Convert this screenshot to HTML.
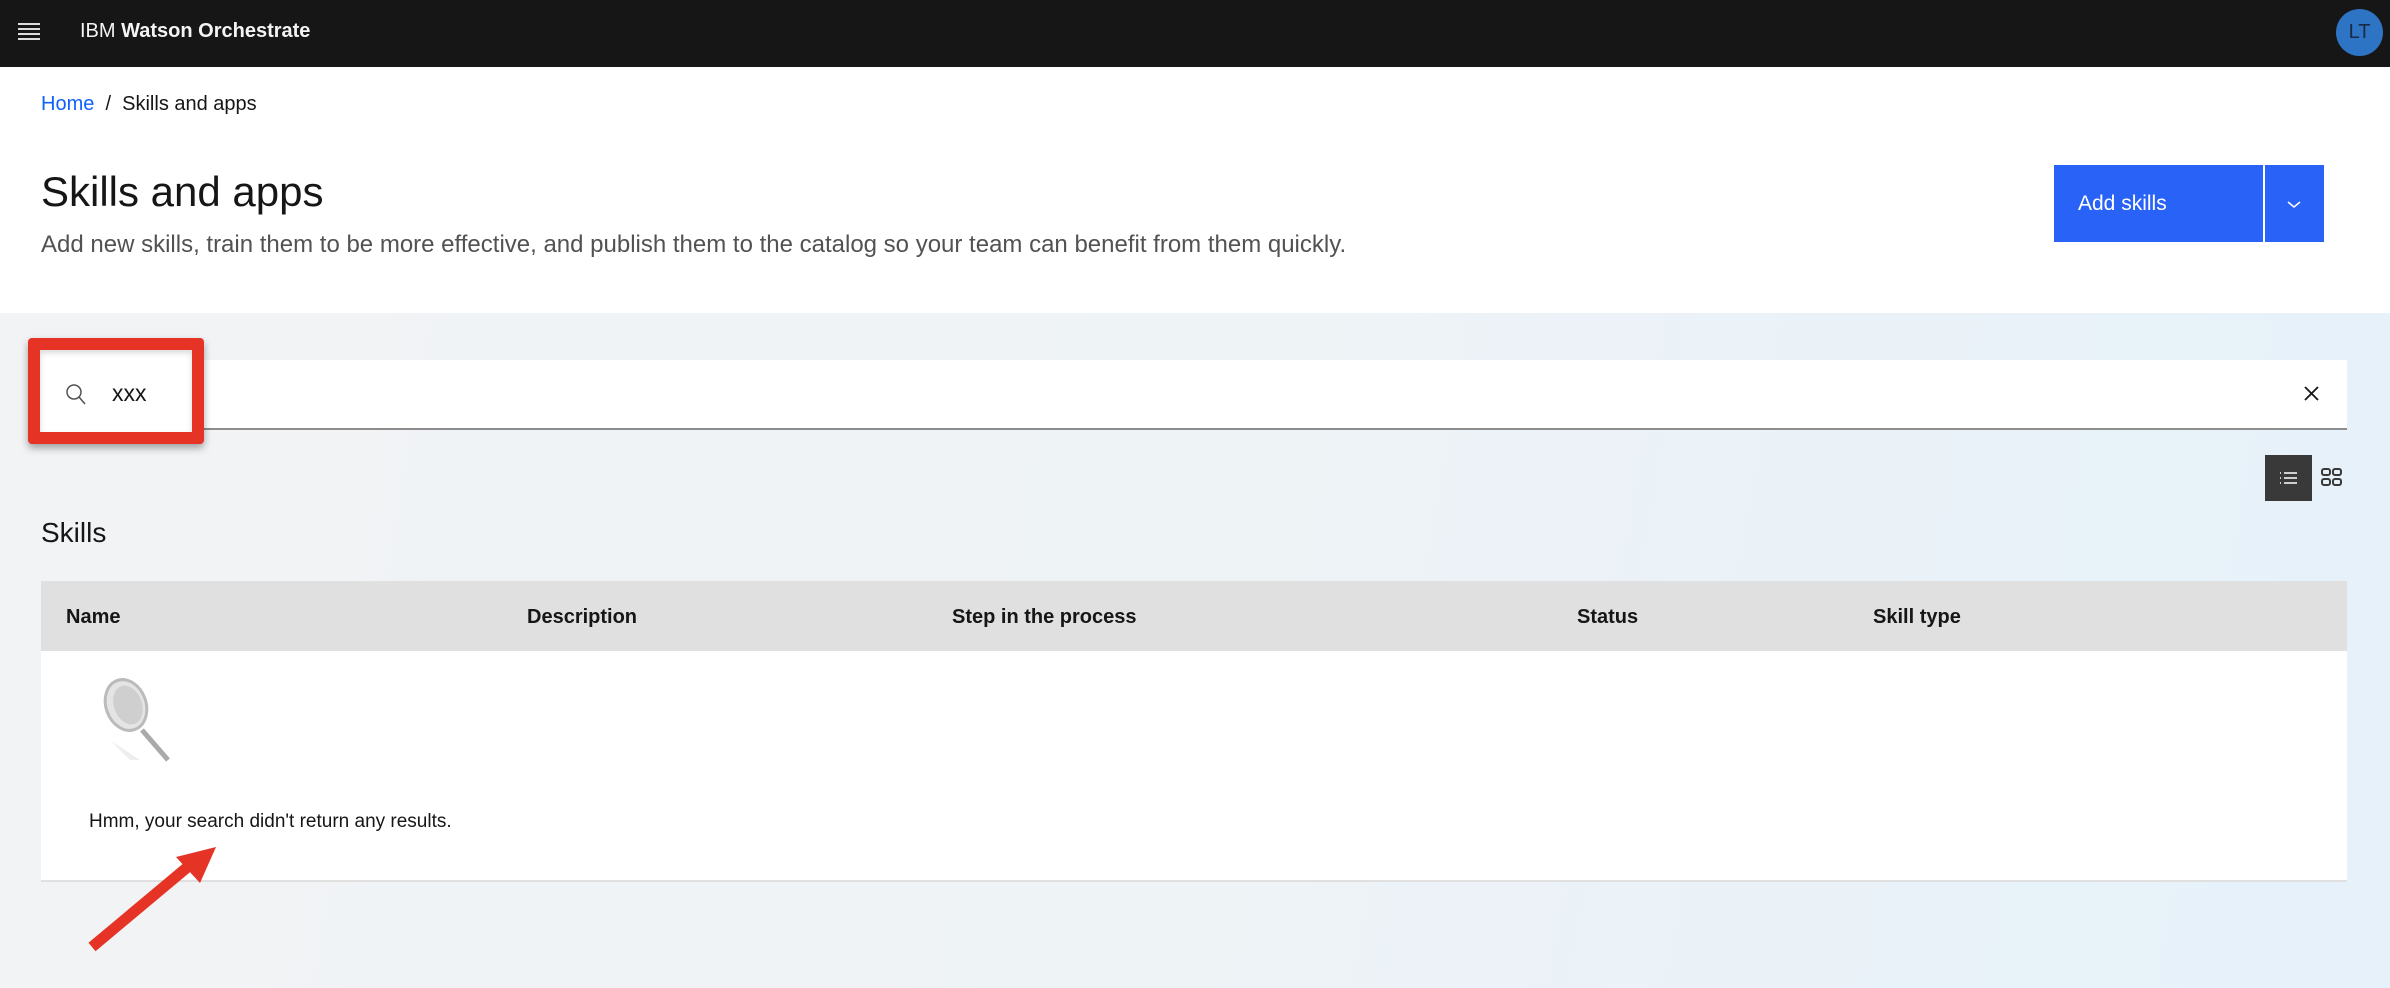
<!DOCTYPE html>
<html><head><meta charset="utf-8"><style>
*{margin:0;padding:0;box-sizing:border-box}
body{width:2390px;height:988px;overflow:hidden;font-family:"Liberation Sans",sans-serif;background:#fff;position:relative}
.abs{position:absolute}
#hdr{left:0;top:0;width:2390px;height:67px;background:#161616}
#gray{left:0;top:313px;width:2390px;height:675px;background:linear-gradient(100deg,#f2f3f5 0%,#eef3f6 50%,#e6f1fa 100%)}
.th{position:absolute;top:606px;font-size:20px;font-weight:bold;color:#161616}
</style></head><body>
<div id="hdr" class="abs">
  <div class="abs" style="left:18px;top:23px;width:22px;">
    <div style="height:2px;background:#ddd;margin-bottom:3px"></div>
    <div style="height:2px;background:#ddd;margin-bottom:3px"></div>
    <div style="height:2px;background:#ddd;margin-bottom:3px"></div>
    <div style="height:2px;background:#ddd"></div>
  </div>
  <div class="abs" style="left:80px;top:20px;font-size:20px;color:#f4f4f4">IBM <b>Watson Orchestrate</b></div>
  <div class="abs" style="left:2336px;top:9px;width:47px;height:47px;border-radius:50%;background:#2d74c4;color:#1a2a44;font-size:20px;line-height:47px;text-align:center">LT</div>
</div>
<div class="abs" style="left:41px;top:93px;font-size:20px;color:#161616"><span style="color:#0f62fe">Home</span>&nbsp;&nbsp;/&nbsp;&nbsp;Skills and apps</div>
<div class="abs" style="left:41px;top:168px;font-size:42px;color:#161616">Skills and apps</div>
<div class="abs" style="left:41px;top:231px;font-size:24px;color:#525252">Add new skills, train them to be more effective, and publish them to the catalog so your team can benefit from them quickly.</div>
<div class="abs" style="left:2054px;top:165px;width:209px;height:77px;background:#2962f6;color:#fff;font-size:21px;line-height:77px;padding-left:24px">Add skills</div>
<div class="abs" style="left:2265px;top:165px;width:59px;height:77px;background:#2962f6"><svg width="59" height="77"><path d="M23 37l6 5 6-5" stroke="#fff" stroke-width="1.5" fill="none"/></svg></div>
<div id="gray" class="abs"></div>
<div class="abs" style="left:41px;top:360px;width:2306px;height:70px;background:#fff;border-bottom:2px solid #8d8d8d"></div>
<div class="abs" style="left:28px;top:338px;width:176px;height:106px;border:12px solid #e53425;border-radius:4px;background:#fff;box-shadow:0 4px 8px rgba(0,0,0,.35), inset 0 3px 6px rgba(0,0,0,.15)"></div>
<svg class="abs" style="left:64px;top:382px" width="24" height="26"><circle cx="10" cy="10" r="7" stroke="#525252" stroke-width="1.5" fill="none"/><path d="M15 15l6 7" stroke="#525252" stroke-width="1.5"/></svg>
<div class="abs" style="left:112px;top:380px;font-size:23px;color:#161616">xxx</div>
<svg class="abs" style="left:2302px;top:384px" width="20" height="20"><path d="M3 3l13 13M16 3L3 16" stroke="#161616" stroke-width="1.8"/></svg>
<div class="abs" style="left:2265px;top:455px;width:47px;height:46px;background:#393939"><svg width="47" height="46"><g stroke="#fff" stroke-width="1.5"><path d="M19 18h13M19 23h13M19 28h13"/><path d="M15 18h1M15 23h1M15 28h1"/></g></svg></div>
<svg class="abs" style="left:2318px;top:464px" width="28" height="28"><g stroke="#393939" stroke-width="2" fill="none"><rect x="4" y="5" width="8" height="6" rx="2"/><rect x="15" y="5" width="8" height="6" rx="2"/><rect x="4" y="15" width="8" height="6" rx="2"/><rect x="15" y="15" width="8" height="6" rx="2"/></g></svg>
<div class="abs" style="left:41px;top:517px;font-size:28px;color:#161616">Skills</div>
<div class="abs" style="left:41px;top:581px;width:2306px;height:70px;background:#e0e0e0"></div>
<div class="th" style="left:66px">Name</div>
<div class="th" style="left:527px">Description</div>
<div class="th" style="left:952px">Step in the process</div>
<div class="th" style="left:1577px">Status</div>
<div class="th" style="left:1873px">Skill type</div>
<div class="abs" style="left:41px;top:651px;width:2306px;height:231px;background:#fff;border-bottom:2px solid #e0e0e0"></div>
<svg class="abs" style="left:100px;top:675px" width="80" height="100">
<path d="M10 65 L40 85 L30 85 Z" fill="#eee"/>
<ellipse cx="26" cy="30" rx="20" ry="26" transform="rotate(-20 26 30)" fill="#e4e4e4" stroke="#bbb" stroke-width="3"/>
<ellipse cx="28" cy="30" rx="14" ry="20" transform="rotate(-20 28 30)" fill="#cfcfcf"/>
<path d="M42 55 L68 85" stroke="#aaa" stroke-width="5"/>
</svg>
<div class="abs" style="left:89px;top:811px;font-size:19px;color:#161616">Hmm, your search didn't return any results.</div>
<svg class="abs" style="left:80px;top:835px;overflow:visible" width="150" height="120"><path d="M12 112 L110 30" stroke="#e53425" stroke-width="11"/><path d="M136 12 L96 22 L120 48 Z" fill="#e53425"/></svg>
</body></html>
